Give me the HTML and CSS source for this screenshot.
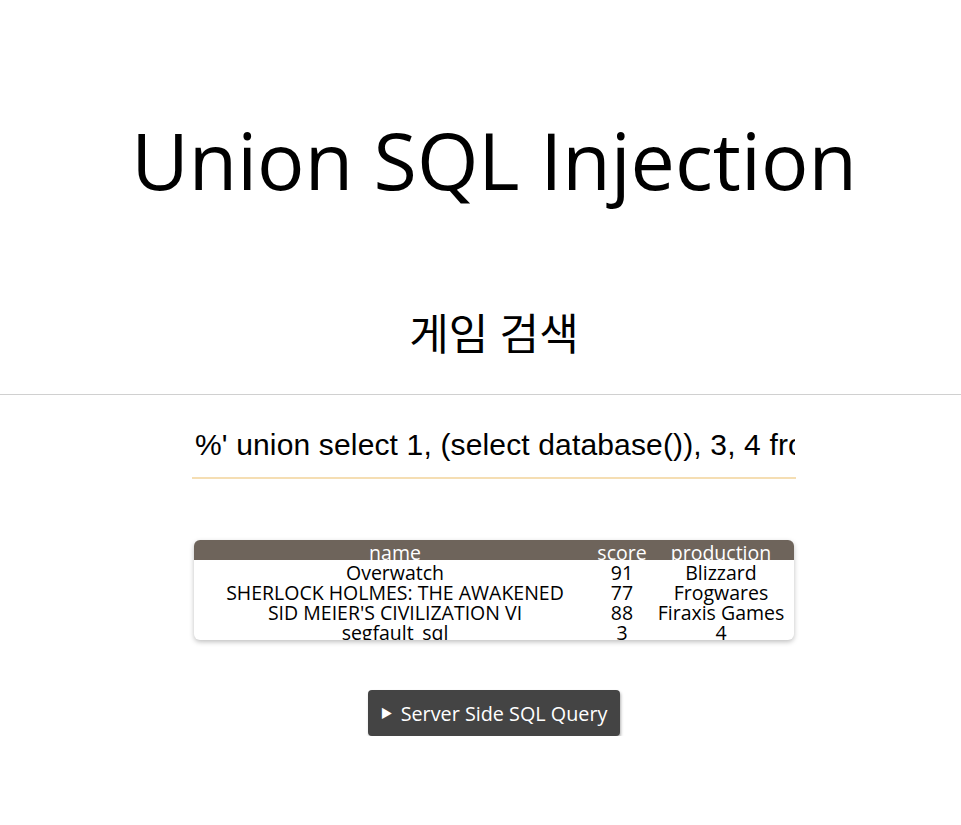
FILE: index.html
```html
<!DOCTYPE html>
<html lang="ko">
<head>
    <meta charset="UTF-8">
    <meta name="viewport" content="width=device-width, initial-scale=1.0">
    <title>Union SQL Injection</title>
    <link rel="stylesheet" href="styles.css">
</head>
<body>
    <h1 class="title">Union SQL Injection</h1>

    <h2 class="subtitle">게임 검색</h2>
    <hr class="divider">

    <div class="search">
        <input type="text" class="search-input" value="%' union select 1, (select database()), 3, 4 from dual -- ">
    </div>

    <div class="result">
        <table class="result-table">
            <thead>
                <tr>
                    <th class="col-name">name</th>
                    <th class="col-score">score</th>
                    <th class="col-prod">production</th>
                </tr>
            </thead>
            <tbody>
                <tr><td>Overwatch</td><td>91</td><td>Blizzard</td></tr>
                <tr><td>SHERLOCK HOLMES: THE AWAKENED</td><td>77</td><td>Frogwares</td></tr>
                <tr><td>SID MEIER'S CIVILIZATION VI</td><td>88</td><td>Firaxis Games</td></tr>
                <tr><td>segfault_sql</td><td>3</td><td>4</td></tr>
            </tbody>
        </table>
    </div>

    <div class="query">
        <button class="query-button"><span class="arrow">&#9654;</span>Server Side SQL Query</button>
    </div>
</body>
</html>
```

FILE: styles.css
```css
html, body {
    margin: 0;
    padding: 0;
    background: #fff;
    color: #000;
    font-family: "Open Sans", "Noto Sans CJK KR", sans-serif;
}

.title,
.subtitle,
.search,
.result,
.query {
    padding-left: 27px;
}

.title {
    margin: 0;
    padding-top: 104px;
    font-size: 79px;
    font-weight: normal;
    line-height: 112px;
    text-align: center;
}

.subtitle {
    margin: 0;
    padding-top: 90px;
    font-size: 43px;
    font-weight: normal;
    line-height: 56px;
    text-align: center;
}

.divider {
    margin: 32px 0 0;
    border: none;
    border-top: 1px solid #d0d0d0;
}

.search {
    display: flex;
    justify-content: center;
    padding-top: 27px;
}

.search-input {
    width: 600px;
    padding: 6px 1px 15px 3px;
    border: none;
    border-bottom: 2px solid #f5deb3;
    outline: none;
    font-family: "Liberation Sans", Arial, sans-serif;
    font-size: 30px;
    letter-spacing: 0.15px;
    color: #000;
    background: transparent;
}

.result {
    display: flex;
    justify-content: center;
    padding-top: 61px;
}

.result-table {
    width: 600px;
    table-layout: fixed;
    border-collapse: collapse;
    border-radius: 6px;
    overflow: hidden;
    box-shadow: 0 2px 5px rgba(0, 0, 0, 0.25);
    font-size: 19.5px;
    line-height: 15px;
}

.result-table .col-name {
    width: 402px;
}

.result-table .col-score {
    width: 52px;
}

.result-table .col-prod {
    width: 146px;
}

.result-table th {
    height: 20px;
    padding: 5px 0 0;
    box-sizing: border-box;
    background: #6e645b;
    color: #fff;
    font-weight: normal;
}

.result-table td {
    height: 20px;
    padding: 5px 0 0;
    box-sizing: border-box;
    text-align: center;
    white-space: nowrap;
}

.query {
    display: flex;
    justify-content: center;
    padding-top: 50px;
}

.query-button {
    display: flex;
    align-items: center;
    height: 46px;
    padding: 0 13px;
    background: #444;
    color: #fff;
    border: none;
    border-radius: 4px;
    box-shadow: 1px 2px 3px rgba(0, 0, 0, 0.3);
    font-family: "Open Sans", "Noto Sans CJK KR", sans-serif;
    font-size: 19.8px;
    cursor: pointer;
}

.query-button .arrow {
    margin-right: 8px;
    font-size: 12px;
}
```
